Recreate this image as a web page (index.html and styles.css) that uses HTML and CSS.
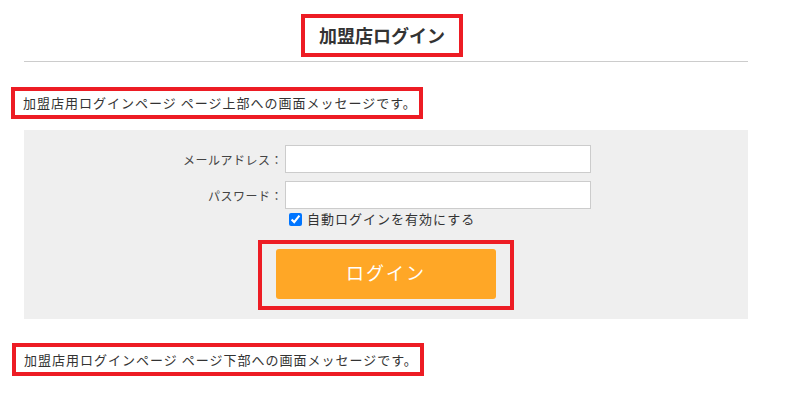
FILE: index.html
```html
<!DOCTYPE html>
<html lang="ja">

<head>
    <meta charset="UTF-8">
    <meta name="viewport" content="width=device-width, initial-scale=1.0">
    <title>加盟店ログイン</title>
    <link rel="stylesheet" href="styles.css">
</head>

<body>
    <div class="wrap">
        <!-- タイトル -->
        <div class="head">
            <h1 class="title">加盟店ログイン</h1>
        </div>
        <hr class="line">

        <!-- 上部メッセージ -->
        <p class="msg msg-top">加盟店用ログインページ ページ上部への画面メッセージです。</p>

        <!-- ログインフォーム -->
        <div class="panel">
            <form class="form">
                <label class="label" for="mail">メールアドレス：</label>
                <input class="field" type="text" id="mail">
                <label class="label" for="pass">パスワード：</label>
                <input class="field" type="password" id="pass">
                <span></span>
                <label class="auto"><input type="checkbox" checked>自動ログインを有効にする</label>
            </form>
            <div class="btn-area">
                <div class="btn-box">
                    <button class="btn" type="button">ログイン</button>
                </div>
            </div>
        </div>

        <!-- 下部メッセージ -->
        <p class="msg msg-bottom">加盟店用ログインページ ページ下部への画面メッセージです。</p>
    </div>
</body>

</html>
```

FILE: styles.css
```css
html,
body,
h1,
p,
form {
    margin: 0;
    padding: 0;
}

body {
    font-family: "Noto Sans CJK JP", "Noto Sans", sans-serif;
    color: #333;
    background: #fff;
}

.wrap {
    width: 724px;
    margin-left: 24px;
}

.head {
    padding-top: 14px;
    padding-right: 8px;
    text-align: center;
}

.title {
    display: inline-block;
    border: 4px solid #ed1c24;
    padding: 0 14px;
    font-size: 18px;
    line-height: 35px;
    font-weight: bold;
    vertical-align: top;
}

.line {
    margin: 4px 0 0;
    border: none;
    border-top: 1px solid #ccc;
}

.msg {
    width: fit-content;
    border: 4px solid #ed1c24;
    padding: 0 2px 0 8px;
    font-size: 13px;
    letter-spacing: 1px;
    line-height: 24px;
}

.msg-top {
    margin: 25px 0 0 -13px;
}

.msg-bottom {
    margin: 24px 0 0 -12px;
    line-height: 25px;
}

.panel {
    margin-top: 11px;
    background: #efefef;
    padding: 15px 0 9px;
}

.form {
    display: grid;
    grid-template-columns: 150px 306px;
    column-gap: 2px;
    row-gap: 8px;
    margin-left: 109px;
    align-items: center;
}

.label {
    text-align: right;
    font-size: 12px;
    letter-spacing: 0.5px;
    color: #444;
}

.field {
    box-sizing: border-box;
    height: 28px;
    width: 306px;
    border: 1px solid #ccc;
    background: #fff;
    margin: 0;
}

.auto {
    font-size: 13px;
    letter-spacing: 1px;
    line-height: 16px;
    margin-top: -6px;
    display: flex;
    align-items: center;
}

.auto input {
    margin: 0 5px 0 4px;
    width: 13px;
    height: 13px;
}

.btn-area {
    display: flex;
    justify-content: center;
    margin-top: 13px;
}

.btn-box {
    border: 4px solid #ed1c24;
    padding: 5px 14px 7px;
}

.btn {
    display: block;
    width: 220px;
    height: 50px;
    padding: 0 0 4px;
    border: none;
    border-radius: 3px;
    background: #ffa726;
    color: #fff;
    font-family: "Noto Sans CJK JP", sans-serif;
    font-size: 18px;
    letter-spacing: 2px;
    font-weight: normal;
}
```
